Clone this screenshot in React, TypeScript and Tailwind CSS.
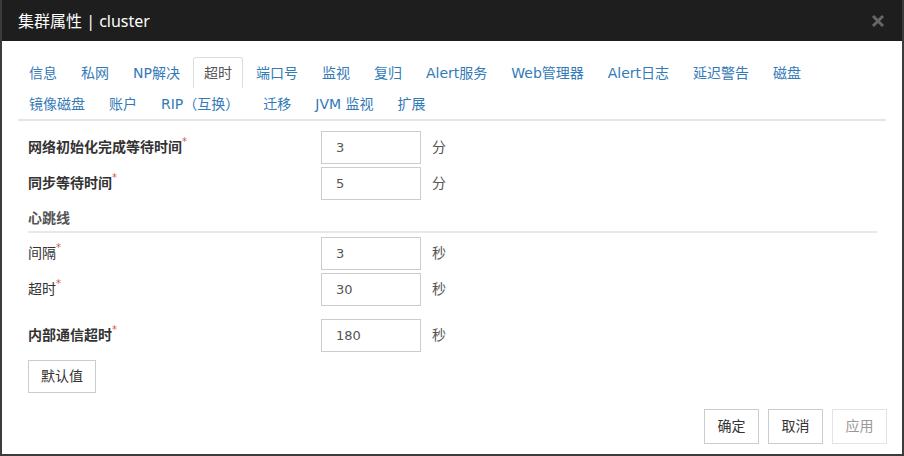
import React from 'react';

const row1 = ['信息', '私网', 'NP解决', '超时', '端口号', '监视', '复归', 'Alert服务', 'Web管理器', 'Alert日志', '延迟警告', '磁盘'];
const row2 = ['镜像磁盘', '账户', 'RIP（互换）', '迁移', 'JVM 监视', '扩展'];

const Tab = ({ label, active }: { label: string; active?: boolean }) => (
    <div
        className={`mr-[2px] h-[31px] px-[10px] flex items-center text-[14px] leading-none border ${
            active ? 'border-[#ddd] border-b-white text-[#555] rounded-t-[3px] bg-white' : 'border-transparent text-[#337ab7]'
        }`}
    >
        {label}
    </div>
);

const Field = ({ label, value, unit, bold }: { label: string; value: string; unit: string; bold?: boolean }) => (
    <div className="flex items-center h-[33px]">
        <div className={`w-[293px] text-[14px] text-[#333] ${bold ? 'font-bold' : ''}`}>
            {label}
            <span className="text-[#d9534f] text-[10px] font-normal align-top relative top-[-3px]">*</span>
        </div>
        <div className="w-[100px] h-[33px] border border-[#ccc] flex items-center px-[14px] text-[13px] text-[#555]">{value}</div>
        <div className="ml-[11px] text-[14px] text-[#555]">{unit}</div>
    </div>
);

const Btn = ({ children, disabled }: { children: React.ReactNode; disabled?: boolean }) => (
    <div
        className={`h-[35px] w-[55px] flex items-center justify-center border text-[14px] ${
            disabled ? 'border-[#e3e3e3] text-[#999]' : 'border-[#ccc] text-[#333]'
        }`}
    >
        {children}
    </div>
);

export default function App() {
    return (
        <div
            className="w-[904px] h-[456px] bg-white border-[2px] border-t-0 border-[#3c3c3c] flex flex-col"
            style={{ fontFamily: '"DejaVu Sans", "Noto Sans CJK SC", sans-serif' }}
        >
            <div className="h-[41px] bg-[#1e1e1e] flex items-center justify-between pl-[16px] pr-[17px] shrink-0">
                <div className="text-white text-[16px]" style={{ fontFamily: '"Noto Sans", "Noto Sans CJK SC", sans-serif' }}>
                    集群属性 | cluster
                </div>
                <svg width="14" height="14" viewBox="0 0 14 14">
                    <path d="M2 2 L12 12 M12 2 L2 12" stroke="#666" strokeWidth="3" />
                </svg>
            </div>

            <div className="px-[16px] pt-[16px]">
                <div className="border-b-2 border-[#e5e5e5] w-[868px]">
                    <div className="flex">
                        {row1.map((t) => (
                            <Tab key={t} label={t} active={t === '超时'} />
                        ))}
                    </div>
                    <div className="flex">
                        {row2.map((t) => (
                            <Tab key={t} label={t} />
                        ))}
                    </div>
                </div>
            </div>

            <div className="pl-[26px] pt-[10px] flex flex-col">
                <Field label="网络初始化完成等待时间" value="3" unit="分" bold />
                <div className="mt-[3px]">
                    <Field label="同步等待时间" value="5" unit="分" bold />
                </div>
                <div className="mt-[8px] w-[849px] border-b-2 border-[#e8e8e8] pb-[2px] text-[14px] font-bold text-[#555]">心跳线</div>
                <div className="mt-[4px]">
                    <Field label="间隔" value="3" unit="秒" />
                </div>
                <div className="mt-[3px]">
                    <Field label="超时" value="30" unit="秒" />
                </div>
                <div className="mt-[13px]">
                    <Field label="内部通信超时" value="180" unit="秒" bold />
                </div>
                <div className="mt-[8px] w-[68px] h-[33px] border border-[#ccc] flex items-center justify-center text-[14px] text-[#333]">
                    默认值
                </div>
            </div>

            <div className="flex justify-end gap-[9px] pr-[15px] mt-auto mb-[10px]">
                <Btn>确定</Btn>
                <Btn>取消</Btn>
                <Btn disabled>应用</Btn>
            </div>
        </div>
    );
}
